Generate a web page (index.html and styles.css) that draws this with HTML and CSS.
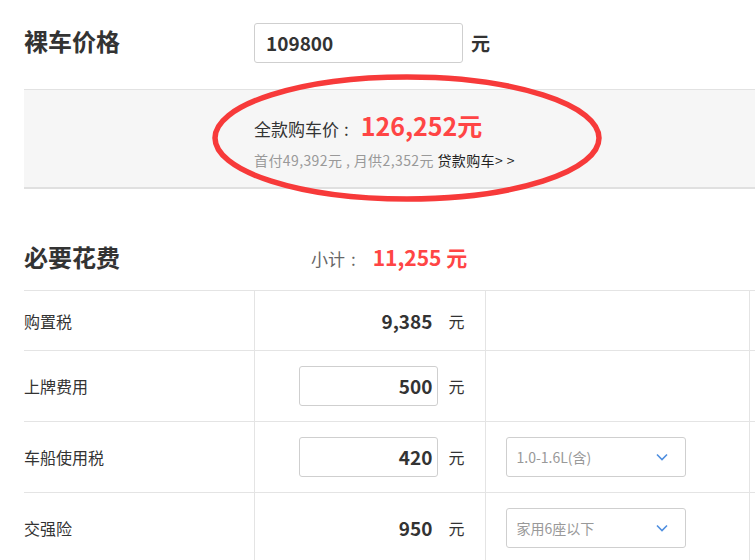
FILE: index.html
```html
<!DOCTYPE html>
<html lang="zh-CN">
<head>
<meta charset="utf-8">
<title>购车计算</title>
<link rel="stylesheet" href="styles.css">
</head>
<body>
<div class="page">
  <section class="price-row">
    <h2 class="title price-title">裸车价格</h2>
    <div class="big-input">109800</div>
    <span class="big-unit">元</span>
  </section>

  <section class="summary">
    <p class="total">全款购车价<span class="colon">:</span><strong>126,252元</strong></p>
    <p class="loan">首付49,392元 , 月供2,352元 <a class="loan-link">贷款购车&gt; &gt;</a></p>
    <svg class="circle" width="400" height="140" viewBox="0 0 400 140" aria-hidden="true">
      <ellipse cx="200" cy="70" rx="192" ry="61" fill="none" stroke="#f73a3a" stroke-width="5.5"/>
    </svg>
  </section>

  <section class="cost-head">
    <h2 class="title cost-title">必要花费</h2>
    <span class="subtotal">小计<span class="colon">:</span><strong>11,255 元</strong></span>
  </section>

  <table class="costs">
    <colgroup>
      <col class="c1"><col class="c2"><col class="c3"><col class="c4">
    </colgroup>
    <tr class="r-short">
      <td class="name">购置税</td>
      <td class="val"><div class="amount"><span class="num">9,385</span><span class="unit">元</span></div></td>
      <td></td><td></td>
    </tr>
    <tr>
      <td class="name">上牌费用</td>
      <td class="val"><div class="amount"><span class="num boxed">500</span><span class="unit">元</span></div></td>
      <td></td><td></td>
    </tr>
    <tr>
      <td class="name">车船使用税</td>
      <td class="val"><div class="amount"><span class="num boxed">420</span><span class="unit">元</span></div></td>
      <td class="opt"><div class="select"><span>1.0-1.6L(含)</span><svg class="chev" width="12" height="8" viewBox="0 0 12 8"><polyline points="1,1.5 6,6.5 11,1.5" fill="none" stroke="#4f8fe0" stroke-width="1.6"/></svg></div></td>
      <td></td>
    </tr>
    <tr>
      <td class="name">交强险</td>
      <td class="val"><div class="amount"><span class="num">950</span><span class="unit">元</span></div></td>
      <td class="opt"><div class="select"><span>家用6座以下</span><svg class="chev" width="12" height="8" viewBox="0 0 12 8"><polyline points="1,1.5 6,6.5 11,1.5" fill="none" stroke="#4f8fe0" stroke-width="1.6"/></svg></div></td>
      <td></td>
    </tr>
  </table>
</div>
</body>
</html>
```

FILE: styles.css
```css
html, body {
  margin: 0;
  padding: 0;
  background: #fff;
  overflow: hidden;
}
body {
  font-family: "Noto Sans CJK SC", "Noto Sans", sans-serif;
  color: #333;
}
.page {
  position: relative;
  padding-left: 24px;
  width: 900px;
}
.title {
  margin: 0;
  font-size: 24px;
  font-weight: bold;
  color: #333;
  line-height: 36px;
}
.price-row {
  display: flex;
  align-items: center;
  padding-top: 23px;
  height: 40px;
}
.price-title {
  width: 230px;
  margin-top: -5px;
}
.big-input {
  box-sizing: border-box;
  width: 209px;
  height: 40px;
  border: 1px solid #cfcfcf;
  border-radius: 3px;
  padding-left: 11px;
  font-size: 19px;
  font-weight: bold;
  line-height: 38px;
  color: #333;
}
.big-unit {
  margin-left: 8px;
  margin-top: -2px;
  font-size: 19px;
  font-weight: bold;
}
.summary {
  position: relative;
  margin-top: 26px;
  box-sizing: border-box;
  height: 100px;
  background: #f6f6f6;
  border-top: 1px solid #e2e2e2;
  border-bottom: 2px solid #e0e0e0;
  padding: 19px 0 0 230px;
}
.total {
  margin: 0;
  font-size: 17px;
  line-height: 32px;
  color: #333;
}
.total .colon {
  margin: 0 12px 0 5px;
}
.total strong {
  font-size: 25px;
  color: #ff4545;
  font-weight: bold;
}
.loan {
  margin: 5px 0 0;
  font-size: 14px;
  letter-spacing: 0.4px;
  line-height: 20px;
  color: #999;
}
.loan-link {
  color: #222;
}
.circle {
  position: absolute;
  left: 183px;
  top: -22px;
  overflow: visible;
}
.cost-head {
  display: flex;
  align-items: center;
  margin-top: 50px;
  height: 36px;
  margin-bottom: 15px;
}
.cost-title {
  width: 287px;
}
.subtotal {
  font-size: 17px;
  color: #666;
}
.subtotal .colon {
  margin: 0 17px 0 6px;
}
.subtotal strong {
  font-size: 21px;
  color: #ff4545;
  font-weight: bold;
}
.costs {
  border-collapse: collapse;
  table-layout: fixed;
  width: 800px;
}
.c1 { width: 230px; }
.c2 { width: 231px; }
.c3 { width: 264px; }
.c4 { width: 75px; }
.costs td {
  border: 1px solid #e4e4e4;
  height: 70px;
  padding: 0;
  vertical-align: middle;
}
.costs tr.r-short td {
  height: 59px;
}
.costs td:first-child {
  border-left: none;
}
.name {
  font-size: 16px;
  color: #333;
}
.amount {
  display: flex;
  align-items: center;
  justify-content: flex-end;
  padding-right: 20px;
}
.num {
  box-sizing: border-box;
  width: 139px;
  height: 40px;
  padding-right: 5px;
  text-align: right;
  font-size: 19px;
  font-weight: bold;
  line-height: 38px;
  color: #333;
  border: 1px solid transparent;
}
.num.boxed {
  border-color: #cfcfcf;
  border-radius: 3px;
}
.unit {
  margin-left: 10px;
  font-size: 16px;
  color: #333;
}
.opt {
  padding-left: 20px !important;
}
.select {
  box-sizing: border-box;
  width: 180px;
  height: 40px;
  border: 1px solid #cfcfcf;
  border-radius: 3px;
  display: flex;
  align-items: center;
  justify-content: space-between;
  padding: 0 17px 0 10px;
  font-size: 14px;
  color: #999;
}
.chev {
  display: block;
}
```
